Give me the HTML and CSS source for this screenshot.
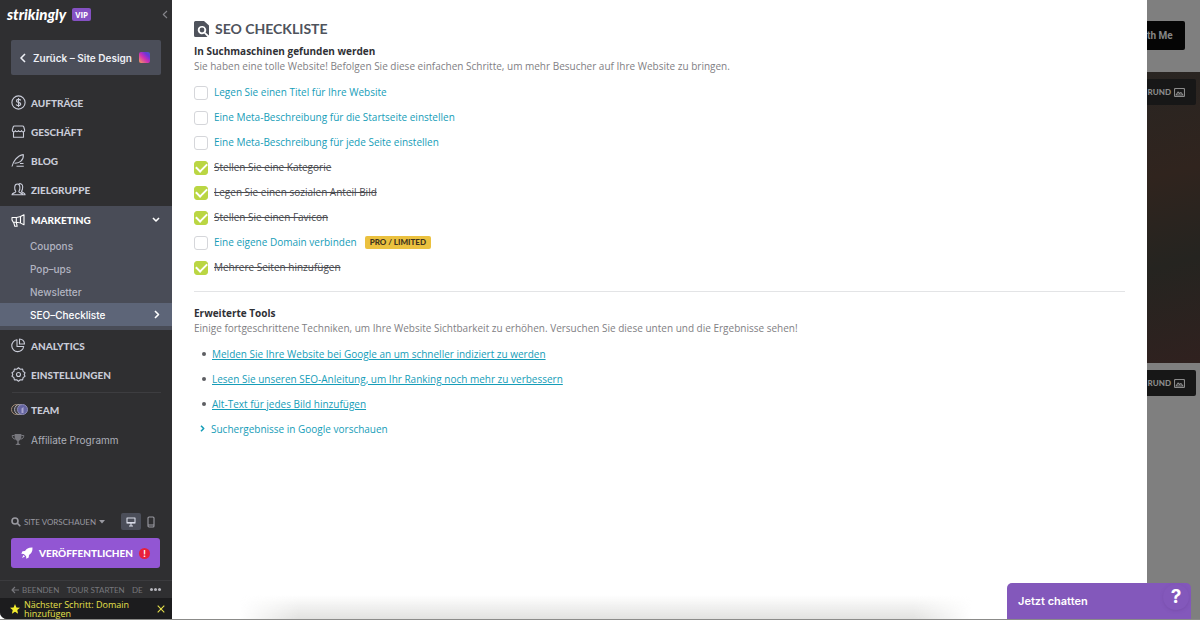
FILE: index.html
```html
<!DOCTYPE html>
<html lang="de">
<head>
<meta charset="utf-8">
<title>SEO Checkliste</title>
<link rel="stylesheet" href="styles.css">
</head>
<body>
<div class="app">
  <aside class="sidebar">
    <header class="brand">
      <span class="logo">strikingly</span><span class="vip">VIP</span>
      <button class="collapse" aria-label="Einklappen"><svg width="6" height="9" viewBox="0 0 6 9"><path class="line" d="M5 1 1.300 4.500 5 8"/></svg></button>
    </header>
    <button class="back">
      <svg width="6" height="10" viewBox="0 0 6 10"><path class="line thick" d="M5 1 1 5l4 4"/></svg>
      <span>Zurück – Site Design</span>
      <span class="thumb"></span>
    </button>
    <nav class="nav">
      <a class="item" href="#"><svg width="15" height="15" viewBox="0 0 15 15"><circle class="line" cx="7.500" cy="7.500" r="6.600"/><path class="line" d="M9.800 5.400C9.200 4.500 8.400 4.400 7.500 4.400c-1.200 0-2.100.5-2.100 1.500 0 2.100 4.300.9 4.300 3.100 0 1-.9 1.600-2.200 1.600-1 0-1.900-.3-2.400-1.200M7.500 3v9"/></svg>AUFTRÄGE</a>
      <a class="item" href="#"><svg width="15" height="15" viewBox="0 0 15 15"><path class="line" d="M3.500 2h8q1 0 1.300 1l.9 3.200c0 2-2.600 2.200-3.100.4-.5 1.400-2.600 1.400-3.100 0-.5 1.400-2.600 1.400-3.100 0-.5 1.800-3.100 1.600-3.100-.4L2.200 3Q2.500 2 3.500 2zM2.500 8v5.300h10V8"/></svg>GESCHÄFT</a>
      <a class="item" href="#"><svg width="15" height="15" viewBox="0 0 15 15"><path class="line" d="M1 13.500C2 9 6 2.500 12.300 1.500c.4 3-.7 5-2.300 6.500-1.500 1.700-4 2.300-6.500 2.300M5.500 13.300h7.300M9 10.500h3.500"/></svg>BLOG</a>
      <a class="item" href="#"><svg width="15" height="15" viewBox="0 0 15 15"><path class="line" d="M1 12.800c0-2 3.800-1.800 3.800-3.300C3.200 7.500 3 2 6.300 2s3.100 5.500 1.500 7.500c0 1.500 4 1.300 4 3.300zM7.500 2.200C9 1.200 11.700 1.500 11.700 4.800c0 2-.4 3.500-1.200 4.500.2 1.200 3.600 1.300 3.600 3.500h-2.300"/></svg>ZIELGRUPPE</a>
      <div class="group">
        <a class="item active" href="#"><svg width="15" height="15" viewBox="0 0 15 15"><path class="line" d="M1 4.500h4.500c2.600 0 4.500-.9 7.500-2.700v10C10 10 8 9.300 5.500 9.300H2.300L1 7zM2.700 9.300l1.100 4h2.400L5.300 9.300M5.300 4.500v4.800M9.500 4v5.700"/></svg>MARKETING
          <svg class="end" width="8" height="6" viewBox="0 0 8 6"><path class="line thick" d="m1 1 3 3 3-3"/></svg></a>
        <a class="sub" href="#">Coupons</a>
        <a class="sub" href="#">Pop–ups</a>
        <a class="sub" href="#">Newsletter</a>
        <a class="sub current" href="#">SEO–Checkliste <svg class="end" width="6" height="9" viewBox="0 0 6 9"><path class="line thick" d="m1 1 3.500 3.500L1 8"/></svg></a>
      </div>
      <a class="item" href="#"><svg width="15" height="15" viewBox="0 0 15 15"><path class="line" d="M6 1.700a6 6 0 1 0 6.700 6.800H6zM8.500 1v5h5c0-2.700-2.200-5-5-5z"/></svg>ANALYTICS</a>
      <a class="item" href="#"><svg width="15" height="15" viewBox="0 0 15 15"><path class="line" d="m7.500.8 1.800 1.400 2.300-.1.500 2.300 1.900 1.300-.8 1.800.8 1.800-1.900 1.300-.5 2.300-2.300-.1-1.800 1.400-1.800-1.400-2.300.1-.5-2.300L1 9.300l.8-1.800L1 5.700l1.900-1.300.5-2.300 2.300.1z"/><circle class="line" cx="7.500" cy="7.500" r="2"/></svg>EINSTELLUNGEN</a>
      <hr class="rule">
      <a class="item" href="#"><svg class="wide" width="17" height="13" viewBox="0 0 17 13"><circle cx="5.500" cy="6.500" r="5" fill="#2f2f31" stroke="#a58d77"/><circle cx="8.500" cy="6.500" r="5" fill="#44434a" stroke="#aaa9b2"/><circle cx="11.500" cy="6.500" r="5" fill="#6464a0" stroke="#8f8db4"/><path d="M10.500 10V5.500l2-1.500v6z" fill="#a9a5cf"/></svg>TEAM</a>
      <a class="item plain" href="#"><svg width="15" height="15" viewBox="0 0 15 15"><path d="M3.600 2h6.800v2c0 3-1.200 4.300-2.700 4.900v2.300l2 1.800H4.300l2-1.800V8.900C4.800 8.300 3.600 7 3.600 4z" fill="#77777d"/><path d="M3.600 3.500H1.200c0 2 1 3.400 3.200 3.700M10.400 3.500h2.400c0 2-1 3.400-3.200 3.700" fill="none" stroke="#77777d"/></svg>Affiliate Programm</a>
    </nav>
    <div class="bottom">
      <div class="preview">
        <button class="site"><svg width="10" height="10" viewBox="0 0 10 10"><circle class="line thick" cx="4" cy="4" r="3"/><path class="line thick" d="m6.300 6.300 3 3"/></svg>SITE VORSCHAUEN<svg width="6" height="4" viewBox="0 0 6 4"><path d="M0 0h6L3 3.500z" fill="currentColor"/></svg></button>
        <button class="device on" aria-label="Desktop"><svg width="10" height="10" viewBox="0 0 10 10"><path class="line" d="M1 1h8v5H1zM5 6v2.800M3 9h4"/><path class="line" d="M1 5.600h8"/></svg></button>
        <button class="device" aria-label="Mobil"><svg width="8" height="12" viewBox="0 0 8 12"><rect class="line" x="1" y="1" width="6" height="10" rx="1"/><path class="line" d="M1 9h6"/></svg></button>
      </div>
      <button class="publish"><svg width="12" height="12" viewBox="0 0 12 12"><path d="M11.500.5C7.500.3 5.500 1.800 4 4L1.500 4.300.3 6.700l2.500.2L5.100 9.200l.2 2.500 2.400-1.200L8 8c2.200-1.500 3.700-3.500 3.500-7.500zM2.500 8 1 11l3-1.500z" fill="#fff"/></svg><span>VERÖFFENTLICHEN</span><b class="alert">!</b></button>
      <div class="foot">
        <a href="#"><svg width="8" height="8" viewBox="0 0 8 8"><path class="line" d="M8 4H1M4 1 1 4l3 3"/></svg>BEENDEN</a>
        <a href="#">TOUR STARTEN</a><a href="#">DE</a>
        <button class="more" aria-label="Mehr"><i></i><i></i><i></i></button>
      </div>
      <div class="notice">
        <svg width="10" height="10" viewBox="0 0 10 10"><path d="m5 0 1.400 3.400 3.600.3-2.700 2.400.8 3.600L5 7.800 1.900 9.700l.8-3.600L0 3.700l3.600-.3z" fill="#f5ee2e"/></svg>
        <a href="#">Nächster Schritt: Domain hinzufügen</a>
        <button aria-label="Schließen"><svg width="8" height="8" viewBox="0 0 8 8"><path class="line" d="m.7.700 6.600 6.600M7.300.7.700 7.300"/></svg></button>
      </div>
    </div>
  </aside>

  <main class="panel">
    <h1 class="title"><svg width="15" height="16" viewBox="0 0 15 16"><path d="M1.500 0H10l5 4.500V14.500L11.500 11.400a4.200 4.200 0 1 0-1.200 1.200L13.500 16h-12A1.500 1.500 0 0 1 0 14.500v-13A1.500 1.500 0 0 1 1.500 0z" fill="#4f535c"/><circle cx="8" cy="9" r="2.400" fill="#4f535c"/></svg>SEO CHECKLISTE</h1>
    <section>
      <h2>In Suchmaschinen gefunden werden</h2>
      <p>Sie haben eine tolle Website! Befolgen Sie diese einfachen Schritte, um mehr Besucher auf Ihre Website zu bringen.</p>
      <ul class="checks">
        <li><input type="checkbox" id="c1"><label for="c1">Legen Sie einen Titel für Ihre Website</label></li>
        <li><input type="checkbox" id="c2"><label for="c2">Eine Meta-Beschreibung für die Startseite einstellen</label></li>
        <li><input type="checkbox" id="c3"><label for="c3">Eine Meta-Beschreibung für jede Seite einstellen</label></li>
        <li><input type="checkbox" id="c4" checked><label for="c4">Stellen Sie eine Kategorie</label></li>
        <li><input type="checkbox" id="c5" checked><label for="c5">Legen Sie einen sozialen Anteil Bild</label></li>
        <li><input type="checkbox" id="c6" checked><label for="c6">Stellen Sie einen Favicon</label></li>
        <li><input type="checkbox" id="c7"><label for="c7">Eine eigene Domain verbinden</label><span class="tag">PRO / LIMITED</span></li>
        <li><input type="checkbox" id="c8" checked><label for="c8">Mehrere Seiten hinzufügen</label></li>
      </ul>
    </section>
    <section class="tools">
      <h2>Erweiterte Tools</h2>
      <p>Einige fortgeschrittene Techniken, um Ihre Website Sichtbarkeit zu erhöhen. Versuchen Sie diese unten und die Ergebnisse sehen!</p>
      <ul class="links">
        <li><i class="dot"></i><a href="#">Melden Sie Ihre Website bei Google an um schneller indiziert zu werden</a></li>
        <li><i class="dot"></i><a href="#">Lesen Sie unseren SEO-Anleitung, um Ihr Ranking noch mehr zu verbessern</a></li>
        <li><i class="dot"></i><a href="#">Alt-Text für jedes Bild hinzufügen</a></li>
        <li class="expand"><svg width="5" height="7" viewBox="0 0 5 7"><path class="line thick" d="m1 .8 2.700 2.700L1 6.200"/></svg><a href="#">Suchergebnisse in Google vorschauen</a></li>
      </ul>
    </section>
    <div class="fade"></div>
  </main>

  <div class="site-edge">
    <div class="site-head"><button class="contact">th Me</button></div>
    <div class="photo"><button class="bg">RUND<svg width="11" height="9" viewBox="0 0 11 9"><rect class="line" x=".5" y=".5" width="10" height="8" rx="1"/><path class="line" d="m2 7 2-3 1.500 1.500L7 4.500 9 7z"/></svg></button></div>
    <div class="next"><button class="bg">RUND<svg width="11" height="9" viewBox="0 0 11 9"><rect class="line" x=".5" y=".5" width="10" height="8" rx="1"/><path class="line" d="m2 7 2-3 1.500 1.500L7 4.500 9 7z"/></svg></button></div>
  </div>
</div>
<button class="chat"><span>Jetzt chatten</span><b class="help">?</b></button>
</body>
</html>
```
FILE: styles.css
```css
* { box-sizing: border-box; }
body { margin: 0; background: #fff; font-family: "Open Sans", sans-serif; font-size: 10px; }
button { margin: 0; padding: 0; border: 0; background: none; color: inherit; font: inherit; cursor: pointer; }
a { color: inherit; text-decoration: none; }
ul { list-style: none; margin: 0; padding: 0; }
svg { display: block; flex: none; }
.line { fill: none; stroke: currentColor; stroke-width: 1.1; stroke-linejoin: round; }
.thick { stroke-width: 1.6; }

.app { display: flex; min-height: 100vh; border-bottom: 1px solid #8b8b89; }

/* Sidebar */
.sidebar { flex: none; width: 172px; display: flex; flex-direction: column; background: #2f2f31; color: #c9ccd8; border-bottom-left-radius: 7px; overflow: hidden; font-family: Lato, sans-serif; }
.brand { display: flex; align-items: center; height: 28px; padding: 0 4px 0 7px; }
.logo { font: italic 900 15px/20px Lato, sans-serif; color: #fff; }
.vip { margin-left: 6px; padding: 0 3px; border-radius: 2px; background: #8551c3; color: #fff; font: 700 8px/13px "Open Sans", sans-serif; }
.collapse { margin-left: auto; color: #85858a; }
.back { display: flex; align-items: center; gap: 7px; height: 35px; margin: 12px 11px 13px; padding: 0 9px; border-radius: 2px; background: #4b4e59; color: #eef0f6; font: 600 10px/16px Inter, sans-serif; white-space: nowrap; }
.thumb { flex: none; width: 11px; height: 11px; border-radius: 2px; background: linear-gradient(45deg, #f3a05a, #d02fb4 45%, #6b35d8 75%, #3e63bd); }
.nav { display: flex; flex-direction: column; }
.item { display: flex; align-items: center; gap: 5px; height: 29px; padding: 0 12px 0 11px; font: 900 10px/16px Lato, sans-serif; }
.wide { margin-right: -2px; }
.end { margin-left: auto; }
.plain { height: 31px; color: #adafb9; font: 400 10px/16px Inter, sans-serif; }
.group { margin: 2px 0 1px; padding-bottom: 4px; background: #494c57; }
.active { height: 28px; color: #fff; }
.sub { display: flex; align-items: center; height: 23px; padding: 0 12px 0 30px; color: #b2b4c1; font: 500 10px/16px Inter, sans-serif; }
.current { background: #5d6578; color: #fff; }
.rule { width: 149px; height: 1px; margin: 3px auto 2px; border: 0; background: #3d3d40; }
.bottom { margin-top: auto; }
.preview { display: flex; align-items: center; height: 17px; margin: 0 11px 8px; color: #9a9aa1; }
.site { display: flex; align-items: center; gap: 3px; font: 400 8px/12px Lato, sans-serif; white-space: nowrap; }
.device { display: grid; place-items: center; width: 20px; height: 17px; border-radius: 2px; }
.on { margin-left: auto; background: #4b4e59; color: #d9dce8; }
.publish { display: flex; align-items: center; justify-content: space-between; width: 149px; height: 30px; margin: 0 11px 12px; padding: 0 10px; border-radius: 3px; background: #9256d3; color: #fff; font: 900 10px/16px Lato, sans-serif; }
.alert { width: 11px; height: 11px; border-radius: 50%; background: #e8213b; font: 900 9px/11px Lato, sans-serif; }
.foot { display: flex; align-items: center; justify-content: space-between; height: 18px; padding: 0 11px; border-top: 1px solid #3b3b3e; color: #77777c; font: 400 8px/12px Lato, sans-serif; white-space: nowrap; }
.foot a { display: flex; align-items: center; gap: 3px; }
.more { display: flex; gap: 1px; }
.more i { width: 3px; height: 3px; border-radius: 50%; background: #b4b4bb; }
.notice { display: flex; align-items: center; gap: 4px; height: 21px; padding: 0 7px 0 10px; background: #1c1c1e; color: #e6e04b; font: 400 9px/9px "Open Sans", sans-serif; }
.notice a { flex: 1; }

/* Checklist */
.panel { position: relative; flex: 1; min-width: 0; padding: 19px 22px 0; background: #fff; color: #7f8084; }
.title { display: flex; align-items: center; gap: 6px; margin: 0 0 5px; color: #4f535c; font: 700 14px/20px Lato, sans-serif; }
h2 { margin: 0; color: #2f3136; font: 700 10px/15px "Open Sans", sans-serif; }
p { margin: 0; line-height: 15px; }
.checks { display: grid; gap: 8px; padding-top: 10px; }
.checks li { display: flex; align-items: center; height: 17px; }
input { appearance: none; display: grid; place-items: center; flex: none; width: 14px; height: 14px; margin: 0 6px 0 0; border: 1px solid #d5d6da; border-radius: 3px; background: #fff; }
input:checked { border-color: #bad643; background: #bad643; }
input:checked::before { content: ""; width: 9px; height: 5px; margin-bottom: 3px; border: solid #fff; border-width: 0 0 2px 2px; transform: rotate(-45deg); }
label { color: #159db8; line-height: 17px; }
input:checked + label { color: #4a4b50; text-decoration: line-through; }
.tag { margin-left: 8px; padding: 0 5px; border-radius: 2px; background: #ebc13f; color: #41341d; font: 900 8px/13px Lato, sans-serif; }
.tools { margin-top: 15px; padding-top: 14px; border-top: 1px solid #e3e4e6; }
.links { display: grid; gap: 8px; padding-top: 9px; }
.links li { display: flex; align-items: center; gap: 6px; height: 17px; padding-left: 8px; color: #159db8; }
.links a { text-decoration: underline; }
.dot { width: 4px; height: 4px; border-radius: 50%; background: #5d5e62; }
.links .expand { padding-left: 6px; }
.links .expand a { text-decoration: none; }
.fade { position: absolute; right: 18%; bottom: 0; left: 7%; height: 24px; background: linear-gradient(transparent, #e2e2e0); mask-image: linear-gradient(90deg, transparent, #000 8%, #000 92%, transparent); }

/* Dimmed site editor */
.site-edge { flex: none; width: 53px; display: flex; flex-direction: column; overflow: hidden; background: #7f7f7f; color: #8b8b8b; }
.site-head { height: 72px; padding: 21px 15px 0 0; }
.contact { width: 100%; height: 29px; padding-right: 13px; border-radius: 0 2px 2px 0; background: #050505; color: #858585; font: 700 10px/16px Roboto, sans-serif; text-align: right; white-space: nowrap; }
.photo, .next { padding: 7px 4px 0 0; }
.photo { height: 291px; background: linear-gradient(165deg, #292522, #30241e 35%, #252420 65%, #30211f); }
.bg { display: flex; align-items: center; justify-content: flex-end; gap: 3px; width: 100%; height: 26px; padding-right: 11px; border-radius: 0 2px 2px 0; background: #171717; font: 900 8px/12px Lato, sans-serif; }

/* Chat launcher */
.chat { position: fixed; right: 9px; bottom: 1px; display: flex; align-items: center; justify-content: space-between; width: 184px; height: 36px; padding: 0 2px 0 11px; border-radius: 5px 5px 0 0; background: #8358bb; color: #fff; font: 600 11px/16px Inter, sans-serif; }
.help { width: 26px; height: 26px; margin-bottom: 8px; border-radius: 50%; box-shadow: 0 1px 3px #6f469f80; font: 700 19px/26px Inter, sans-serif; }
```
